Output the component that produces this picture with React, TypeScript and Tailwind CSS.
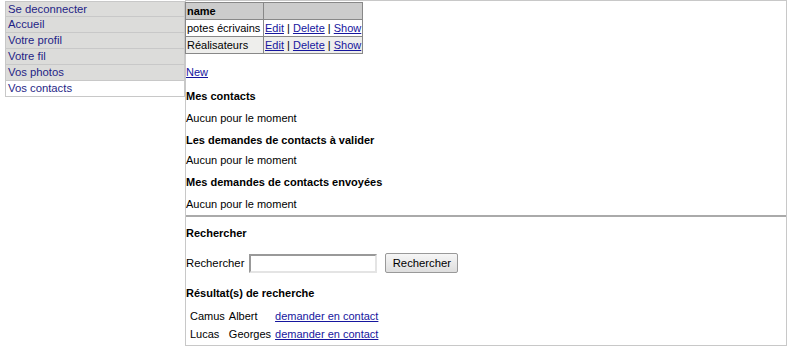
const nav = ['Se deconnecter', 'Accueil', 'Votre profil', 'Votre fil', 'Vos photos', 'Vos contacts'];

const groups = [
  { id: 1, name: 'potes écrivains', bg: 'bg-white' },
  { id: 2, name: 'Réalisateurs', bg: 'bg-[#eeeeec]' },
];

const results = [
  { last: 'Camus', first: 'Albert' },
  { last: 'Lucas', first: 'Georges' },
];

const linkCls = 'text-[#16169e] underline';

const Line = ({ className = '', children }: { className?: string; children: React.ReactNode }) => (
  <div className={`h-[14px] leading-[14px] ${className}`}>{children}</div>
);

export default function App() {
  return (
    <div className="flex bg-white text-[11px] text-black font-['Liberation_Sans',Arial,sans-serif] min-h-[353px]">
      <div className="w-[185px] pl-[5px] pt-[1px] shrink-0">
        {nav.map((item, i) => {
          const active = item === 'Vos contacts';
          return (
            <div
              key={item}
              className={`h-[16px] leading-[15px] pl-[2px] text-[11.3px] border border-[#c8c8c8] ${i > 0 ? 'border-t-0' : ''} ${active ? 'bg-white' : 'bg-[#dcdcda]'} text-[#1f1f86]`}
            >
              {item}
            </div>
          );
        })}
      </div>

      <div className="w-[602px] h-[346px] border border-[#c8c8c8]">
        <table className="border-collapse border border-[#888] mt-[1px] ml-[-1px] table-fixed">
          <thead>
            <tr className="bg-[#cccccc] h-[17px]">
              <th className="border border-[#888] text-left font-bold px-[1px] w-[78px] leading-[14px]">name</th>
              <th className="border border-[#888] w-[97px]"></th>
            </tr>
          </thead>
          <tbody>
            {groups.map((g) => (
              <tr key={g.id} className={`${g.bg} h-[17px]`}>
                <td className="border border-[#888] px-[1px] leading-[14px] whitespace-nowrap">{g.name}</td>
                <td className="border border-[#888] px-[1px] leading-[14px] whitespace-nowrap">
                  <a className={linkCls}>Edit</a> | <a className={linkCls}>Delete</a> | <a className={linkCls}>Show</a>
                </td>
              </tr>
            ))}
          </tbody>
        </table>

        <div>
          <Line className="mt-[11px]">
            <a className={linkCls}>New</a>
          </Line>
          <Line className="mt-[10px] font-bold">Mes contacts</Line>
          <Line className="mt-[8px]">Aucun pour le moment</Line>
          <Line className="mt-[8px] font-bold">Les demandes de contacts à valider</Line>
          <Line className="mt-[6px]">Aucun pour le moment</Line>
          <Line className="mt-[8px] font-bold">Mes demandes de contacts envoyées</Line>
          <Line className="mt-[8px]">Aucun pour le moment</Line>
        </div>

        <div className="mt-[4px] border-t-2 border-[#aaa]"></div>

        <div>
          <Line className="mt-[9px] font-bold">Rechercher</Line>
          <div className="mt-[13px] flex items-center h-[20px]">
            <span className="text-[11.3px]">Rechercher</span>
            <input
              type="text"
              className="ml-[5px] w-[128px] h-[19px] border-2 border-t-[#999] border-l-[#999] border-b-[#e4e4e4] border-r-[#e4e4e4] bg-white outline-none"
            />
            <button className="ml-[8px] w-[73px] h-[20px] border border-[#999] rounded-[2px] bg-gradient-to-b from-[#f6f6f6] to-[#dedede] text-[11.3px] leading-[14px]">
              Rechercher
            </button>
          </div>
          <Line className="mt-[13px] font-bold">Résultat(s) de recherche</Line>
          <table className="mt-[6px] border-separate border-spacing-[2px] ml-[1px]">
            <tbody>
              {results.map((r) => (
                <tr key={r.last} className="h-[16px]">
                  <td className="px-[1px] leading-[14px]">{r.last}</td>
                  <td className="px-[1px] leading-[14px]">{r.first}</td>
                  <td className="px-[1px] leading-[14px]">
                    <a className={linkCls}>demander en contact</a>
                  </td>
                </tr>
              ))}
            </tbody>
          </table>
        </div>
      </div>
    </div>
  );
}
